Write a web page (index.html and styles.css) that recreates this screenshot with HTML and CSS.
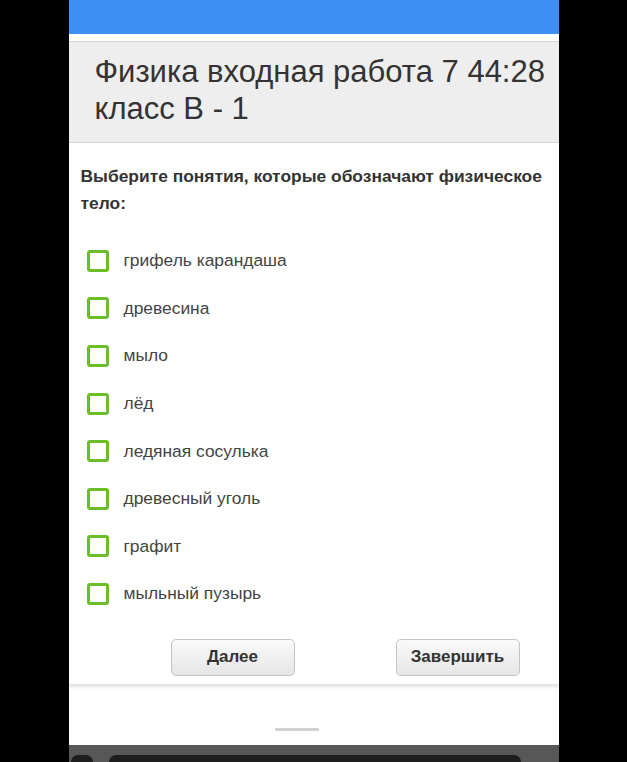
FILE: index.html
```html
<!DOCTYPE html>
<html lang="ru">
<head>
<meta charset="utf-8">
<title>Физика входная работа</title>
<link rel="stylesheet" href="styles.css">
</head>
<body>
<div class="phone">
  <div class="topbar"></div>
  <div class="spacer"></div>
  <header class="header">
    <h1 class="title">Физика входная работа 7 44:28 класс В - 1</h1>
  </header>
  <main class="card">
    <p class="question">Выберите понятия, которые обозначают физическое тело:</p>
    <ul class="options">
      <li class="option"><span class="box"></span><span class="label">грифель карандаша</span></li>
      <li class="option"><span class="box"></span><span class="label">древесина</span></li>
      <li class="option"><span class="box"></span><span class="label">мыло</span></li>
      <li class="option"><span class="box"></span><span class="label">лёд</span></li>
      <li class="option"><span class="box"></span><span class="label">ледяная сосулька</span></li>
      <li class="option"><span class="box"></span><span class="label">древесный уголь</span></li>
      <li class="option"><span class="box"></span><span class="label">графит</span></li>
      <li class="option"><span class="box"></span><span class="label">мыльный пузырь</span></li>
    </ul>
    <div class="actions">
      <button class="btn">Далее</button>
      <button class="btn">Завершить</button>
    </div>
  </main>
  <div class="footer-area">
    <span class="handle"></span>
  </div>
  <div class="navbar">
    <span class="nav-left"></span>
    <span class="nav-main"></span>
  </div>
</div>
</body>
</html>
```
FILE: styles.css
```css
html, body {
  margin: 0;
  padding: 0;
  background: #000;
  height: 100%;
  overflow: hidden;
}
body {
  font-family: "Liberation Sans", Arial, sans-serif;
}
.phone {
  width: 490px;
  height: 762px;
  margin: 0 auto;
  background: #fff;
  display: flex;
  flex-direction: column;
}
.topbar {
  height: 34px;
  background: #3d8ff2;
  flex: none;
}
.spacer {
  height: 7px;
  flex: none;
}
.header {
  flex: none;
  background: #eeeeee;
  border-top: 1px solid #d4d4d4;
  border-bottom: 1px solid #d4d4d4;
  padding: 11px 8px 15px 26px;
}
.title {
  margin: 0;
  font-weight: normal;
  font-size: 31px;
  line-height: 37px;
  color: #333;
}
.card {
  flex: none;
  background: #fff;
  padding: 20px 8px 8px 12px;
  box-shadow: 0 2px 3px rgba(0, 0, 0, 0.12);
  border-bottom: 1px solid #e4e4e4;
  position: relative;
  z-index: 1;
}
.question {
  margin: 0;
  font-weight: bold;
  font-size: 17.4px;
  line-height: 27px;
  color: #333;
}
.options {
  list-style: none;
  margin: 20px 0 0 0;
  padding: 0;
}
.option {
  height: 47.6px;
  display: flex;
  align-items: center;
  padding-left: 6px;
}
.box {
  width: 16px;
  height: 16px;
  border: 3px solid #6cbd2c;
  border-radius: 3px;
  flex: none;
}
.label {
  margin-left: 15px;
  font-size: 17.4px;
  color: #444;
}
.actions {
  display: flex;
  gap: 101px;
  padding-left: 90px;
  margin-top: 21px;
}
.btn {
  width: 124px;
  height: 37px;
  font-family: "Liberation Sans", Arial, sans-serif;
  font-weight: bold;
  font-size: 17px;
  color: #333;
  background: linear-gradient(#fafafa, #e6e6e6);
  border: 1px solid #c4c4c4;
  border-radius: 5px;
  padding: 0;
}
.footer-area {
  flex: 1;
  display: flex;
  justify-content: flex-start;
  align-items: flex-end;
  padding-left: 206px;
  padding-bottom: 14px;
}
.handle {
  width: 44px;
  height: 3px;
  background: #d2d2d2;
  border-radius: 1px;
}
.navbar {
  flex: none;
  height: 17px;
  background: #575757;
  display: flex;
  align-items: flex-end;
  gap: 16px;
  padding-left: 2px;
}
.nav-left {
  width: 22px;
  height: 7px;
  background: #1e1e1e;
  border-radius: 8px 8px 0 0;
}
.nav-main {
  width: 412px;
  height: 7px;
  background: #1e1e1e;
  border-radius: 8px 8px 0 0;
}
```
